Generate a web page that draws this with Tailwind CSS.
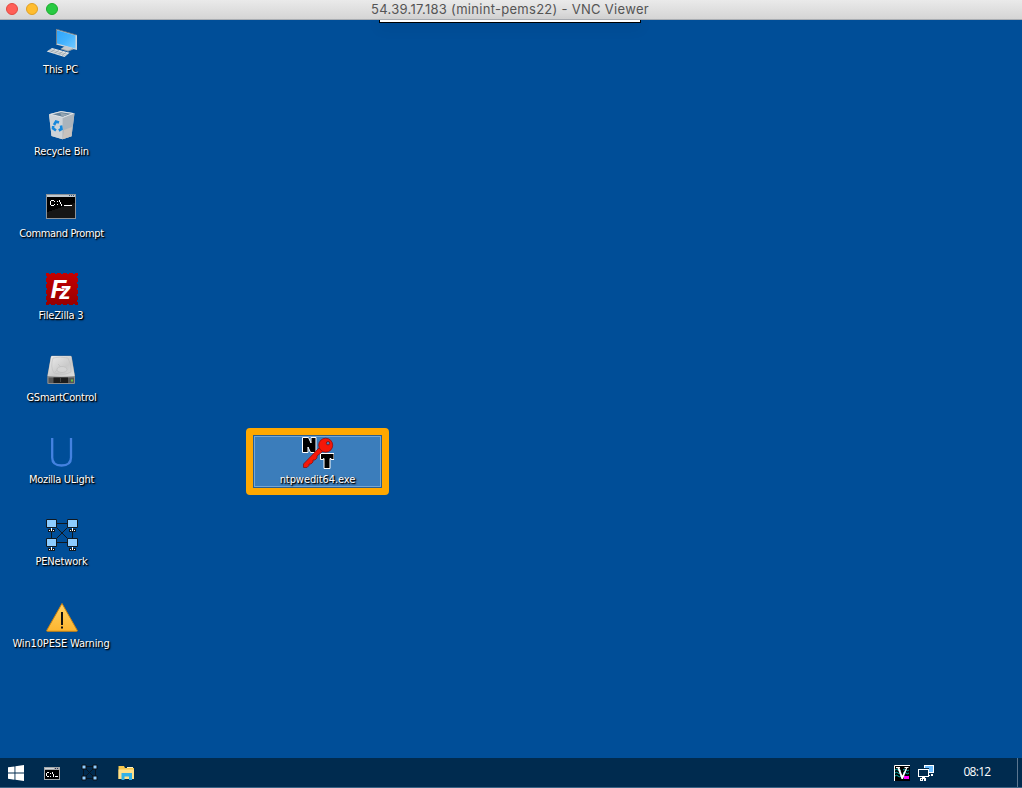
<!DOCTYPE html>
<html lang="en">
<head>
<meta charset="utf-8">
<title>VNC Viewer</title>
<script src="https://cdn.jsdelivr.net/npm/@tailwindcss/browser@4"></script>
</head>
<body class="w-[1022px] h-[788px] overflow-hidden bg-[#004e98] flex flex-col">
<header class="h-5 shrink-0 grid grid-cols-[1fr_auto_1fr] items-center bg-linear-to-b from-[#eaeaea] to-[#d5d5d5] border-b border-[#a9adb2]">
  <div class="flex gap-2 pl-1.5 pt-px -mt-0.5">
    <span class="size-3 rounded-full bg-[#ff5f57] border border-[#e2493f]"></span>
    <span class="size-3 rounded-full bg-[#ffbd2e] border border-[#dfa023]"></span>
    <span class="size-3 rounded-full bg-[#28ca42] border border-[#1bac2c]"></span>
  </div>
  <h1 class="font-['Inter','Liberation_Sans',sans-serif] text-[13px] leading-[18px] tracking-[0.29px] text-[#555] whitespace-nowrap -translate-x-px -mt-0.5">54.39.17.183 (minint-pems22) - VNC Viewer</h1>
</header>

<main class="relative grow flex font-['DejaVu_Sans_Condensed','DejaVu_Sans',sans-serif] text-[11px] leading-[14px] text-white [text-shadow:1px_1px_1px_#000,1px_1px_2px_#000]">
  <div class="absolute left-[379px] top-0 w-[262px] h-[3px] bg-white border border-t-0 border-black shadow-[0_3px_14px_rgba(0,0,0,0.18)]"></div>

  <nav class="w-[123px] pt-[7px] flex flex-col">
    <div class="h-[82px] flex flex-col items-center gap-1">
      <svg class="size-8 shrink-0" viewBox="0 0 32 32">
        <defs><linearGradient id="scr" x1="0" y1="0" x2="1" y2="1"><stop offset="0" stop-color="#2fa4fb"/><stop offset=".5" stop-color="#42b2fe"/><stop offset="1" stop-color="#73c9ff"/></linearGradient></defs>
        <path d="M10 2 31 8V23L10 17.500Z" fill="#d2d6d9"/><path d="M11 3.200 29.500 8.500V21.500L11 16.600Z" fill="url(#scr)"/><path d="M10.500 17.500V2.300L30.500 8" fill="none" stroke="#5b6b78" stroke-width=".8"/>
        <path d="M19 19 25 20.800 28 22 22 24.500 14.500 22Z" fill="#c5cacd"/><path d="M15 22 22 24 27 22" fill="none" stroke="#78848c" stroke-width=".6"/>
        <path d="M6 21 23.500 25.700 18.500 30 .7 24.500Z" fill="#e2e5e7"/><path d="M4 22.500 21 27.300M2.500 23.500 19.500 28.600M9 22 4.500 25.300M13 23 8.500 26.500M17 24.200 12.500 27.800M20 25.200 16 28.800" stroke="#8d9aa3" stroke-width=".6" fill="none"/>
      </svg>
      <span class="whitespace-nowrap tracking-[-0.2px] -ml-0.5">This PC</span>
    </div>
    <div class="h-[82px] flex flex-col items-center gap-1">
      <svg class="size-8 shrink-0" viewBox="0 0 32 32">
        <path d="M3 5.300 15 2 28.500 4.300 25.500 27.300 16.500 30.300 5.500 27Z" fill="#c9ced2"/>
        <path d="M3 5.300 16.700 9 16.500 30.300 5.500 27Z" fill="#cdd3d8"/><path d="M16.700 9 28.500 4.300 25.500 27.300 16.500 30.300Z" fill="#abb4bc"/>
        <path d="M18 21 26 18 25.500 27.300 16.500 30.300Z" fill="#c8c2bd"/>
        <path d="M4.500 5.300 15 2.700 27 4.500 16.700 8.300Z" fill="#66839b" stroke="#e6eaed" stroke-width=".9"/><path d="M14 3.500 16 8 22 5.500Z" fill="#93a4b1"/>
        <path d="M8 16 10 12.500 13 13.500M15 16.500 15.500 20 12.800 21.500M10 21.500 7 19.300 7.200 17" fill="none" stroke="#1688dc" stroke-width="2.600"/>
      </svg>
      <span class="whitespace-nowrap tracking-[-0.2px]">Recycle Bin</span>
    </div>
    <div class="h-[82px] flex flex-col items-center gap-1">
      <svg class="size-8 shrink-0" viewBox="0 0 32 32" shape-rendering="crispEdges">
        <rect y="3" width="30" height="25" fill="#8c9298"/><rect x="1" y="4" width="28" height="2" fill="#c0c8ce"/><path d="M23 4h1v1h-1zM25 4h1v1h-1zM27 4h1v1h-1z" fill="#365779"/>
        <rect x="1" y="6" width="28" height="21" fill="#000"/><path d="M1 21 29 12V27H1Z" fill="#161616"/>
        <path d="M5 9h3v1H5zM4 10h1v4H4zM5 14h3v1H5zM8 10h1v1H8zM8 13h1v1H8zM11 10h1v1h-1zM11 13h1v1h-1zM13 9h1v2h-1zM14 11h1v2h-1zM15 13h1v2h-1zM18 14h8v1h-8z" fill="#fff"/>
      </svg>
      <span class="whitespace-nowrap tracking-[-0.36px]">Command Prompt</span>
    </div>
    <div class="h-[82px] flex flex-col items-center gap-1">
      <svg class="size-8 shrink-0" viewBox="0 0 32 32">
        <defs><linearGradient id="fz" x1="0" y1="0" x2="0" y2="1"><stop offset="0" stop-color="#c50000"/><stop offset="1" stop-color="#970000"/></linearGradient></defs>
        <path d="M0 0H3V1H5V0H9V1H11V0H15V1H17V0H21V1H23V0H27V1H29V0H32V3H31V5H32V9H31V11H32V15H31V17H32V21H31V23H32V27H31V29H32V32H29V31H27V32H23V31H21V32H17V31H15V32H11V31H9V32H5V31H3V32H0V29H1V27H0V23H1V21H0V17H1V15H0V11H1V9H0V5H1V3H0Z" fill="url(#fz)"/>
        <text fill="#fff" font-family="Liberation Sans, sans-serif" font-weight="bold" font-style="italic" class="[text-shadow:none]" x="4.500" y="24.500" font-size="26">F<tspan x="13.300" y="26" font-size="23" stroke="#ad0000" stroke-width="1.200" paint-order="stroke">z</tspan></text>
      </svg>
      <span class="whitespace-nowrap tracking-[-0.2px] -ml-px">FileZilla 3</span>
    </div>
    <div class="h-[82px] flex flex-col items-center gap-1">
      <svg class="size-8 shrink-0" viewBox="0 0 32 32">
        <defs><linearGradient id="hd" x1="0" y1="0" x2="1" y2="1"><stop offset="0" stop-color="#ededed"/><stop offset=".6" stop-color="#c9c9c9"/><stop offset="1" stop-color="#dedede"/></linearGradient></defs>
        <path d="M6 .8H24.500Q25.500 .8 25.800 2L29 21V28Q29 29 28 29H2.500Q1.300 29 1.300 28V21L4.700 2Q5 .8 6 .8Z" fill="#8d8d8d"/>
        <path d="M6 1H24.500Q25.300 1 25.500 2L28.700 21Q15 22.500 1.600 21L5 2Q5.200 1 6 1Z" fill="url(#hd)"/>
        <path d="M7 3Q14 1 22 3Q26 10 25 17Q18 21 8 18Q4 12 7 3M12 9 18 15M9 17l4-4" fill="none" stroke="#bdbdbd" stroke-width=".6"/><ellipse cx="16" cy="14.500" rx="5" ry="3" fill="#d4d4d4" stroke="#bababa" stroke-width=".6"/>
        <path d="M2.500 22.500H28V28H2.500Z" fill="#555"/><path d="M7.500 22.500H22V28H7.500Z" fill="#1c1c1c"/><path d="M14.500 23v4" stroke="#444"/><path d="M25 24.500h2v2h-2z" fill="#66c540"/>
      </svg>
      <span class="whitespace-nowrap tracking-[-0.25px]">GSmartControl</span>
    </div>
    <div class="h-[82px] flex flex-col items-center gap-1">
      <svg class="size-8 shrink-0" viewBox="0 0 32 32"><path d="M6.200 1V20.500C6.200 26 9.500 28.500 15.500 28.500S25 26 25 20.500V1" fill="none" stroke="#4482e0" stroke-width="2.300"/></svg>
      <span class="whitespace-nowrap tracking-[-0.3px]">Mozilla ULight</span>
    </div>
    <div class="h-[82px] flex flex-col items-center gap-1">
      <svg class="size-8 shrink-0" viewBox="0 0 32 32">
        <path d="M11 4.500H21M11 23.500H21M5.500 9V19M26.500 9V19M10 8 22 20M22 8 10 20" stroke="#101820" fill="none"/><circle cx="16" cy="14" r="1" fill="#101820"/>
        <g fill="#8dccff" stroke="#101820"><path d="M.5 .5h10v8H.500zM21.500 .5h10v8h-10zM.5 19.500h10v8H.500zM21.500 19.500h10v8h-10z"/></g>
        <path d="M2 10h7v3H2zM23 10h7v3h-7zM2 29h7v3H2zM23 29h7v3h-7z" fill="#101820"/>
        <path d="M5 9h1v3H5zM3 11h1v1H3zM7 11h1v1H7zM26 9h1v3h-1zM24 11h1v1h-1zM28 11h1v1h-1zM5 28h1v3H5zM3 30h1v1H3zM7 30h1v1H7zM26 28h1v3h-1zM24 30h1v1h-1zM28 30h1v1h-1z" fill="#fff"/>
      </svg>
      <span class="whitespace-nowrap tracking-[-0.15px]">PENetwork</span>
    </div>
    <div class="h-[82px] flex flex-col items-center gap-1">
      <svg class="size-8 shrink-0" viewBox="0 0 32 32">
        <defs><linearGradient id="wr" x1="0" y1="0" x2="0" y2="1"><stop offset="0" stop-color="#ffd264"/><stop offset="1" stop-color="#fdb52e"/></linearGradient></defs>
        <path d="M16 2.500 31.300 29.500Q31.500 30.300 30.700 30.300H1.300Q.5 30.300 .7 29.500Z" fill="url(#wr)" stroke="#c98213" stroke-linejoin="round"/><path d="M15 11H17V24H15ZM15 25.500H17V27.500H15Z" fill="#111"/>
      </svg>
      <span class="whitespace-nowrap tracking-[-0.15px] -ml-px">Win10PESE Warning</span>
    </div>
  </nav>

  <section class="ml-[123px] mt-[408px] w-[143px] h-[67px] rounded-[4px] border-[7px] border-[#ffa800] bg-[#3b7dbb]">
    <div class="size-full border border-[#275d91]">
      <div class="size-full border border-[#76a6d2] flex flex-col items-center gap-1">
        <svg class="size-8 shrink-0" viewBox="0 0 32 32">
          <path d="M.5 .5H6.500L9 6V.5H14V15.500H8.500L6 10V15.500H.5Z" fill="#000" stroke="#fff" stroke-width="1"/>
          <path d="M18.500 16.500H32V22.500H29V21.500H28V31.500H22V21.500H21.500V22.500H18.500Z" fill="#000" stroke="#fff" stroke-width="1"/>
          <path d="M17 11 1.500 27V30.500H5L7 28.500V27H9L11 25V23H13L15 21V19L20.500 14.500Z" fill="#f51708" stroke="#8a1010" stroke-width=".8"/>
          <circle cx="23.700" cy="8.200" r="7" fill="#f51708" stroke="#8a1010" stroke-width=".8"/><circle cx="26" cy="6.200" r="1.700" fill="#4583bd" stroke="#7a1010" stroke-width=".8"/>
        </svg>
        <span class="whitespace-nowrap tracking-[-0.08px]">ntpwedit64.exe</span>
      </div>
    </div>
  </section>
</main>

<footer class="h-[30px] shrink-0 flex items-center justify-between bg-[#002b4f] border-b border-[#3c6485]">
  <div class="flex items-center pl-2 gap-5">
    <svg class="size-4" viewBox="0 0 16 16"><path d="M0 2.300 6.500 1.400V7.600H0ZM7.400 1.300 16 0V7.600H7.400ZM0 8.500H6.500V14.700L0 13.800ZM7.400 8.500H16V16L7.400 14.800Z" fill="#fff"/></svg>
    <svg class="size-4" viewBox="0 0 16 16" shape-rendering="crispEdges"><path d="M0 2h16v13H0z" fill="#a4a8ab"/><path d="M1 5h14v9H1z" fill="#000"/><path d="M1 3h9v1H1z" fill="#d4d7d9"/><path d="M11 3h1v1h-1zM13 3h1v1h-1z" fill="#335"/><path d="M3 7h2v1H3zM2 8h1v3H2zM3 11h2v1H3zM6 8h1v1H6zM6 11h1v1H6zM8 7h1v2H8zM9 9h1v3H9zM11 11h3v1h-3z" fill="#fff"/></svg>
    <svg class="size-[17px] ml-px" viewBox="0 0 17 17"><path d="M2.500 2.500H14.500V14.500H2.500ZM3 3 14 14M14 3 3 14" fill="none" stroke="#071522"/><path d="M1 1h4v4H1zM12 1h4v4h-4zM1 12h4v4H1zM12 12h4v4h-4z" fill="#8dccff" stroke="#0a1016"/></svg>
    <svg class="w-[17px] h-4" viewBox="0 0 17 16"><path d="M.5 1H6L7 3H16V14H.500Z" fill="#f5c74f"/><path d="M.5 4.500H16V14H.500Z" fill="#ffe08a"/><path d="M9 2h6v1H9z" fill="#fff3c4"/><path d="M3.500 8H14V15H11V11.500H6.500V15H3.500Z" fill="#32b1e8"/></svg>
  </div>
  <div class="flex items-center h-full">
    <svg class="size-4" viewBox="0 0 16 16"><path d="M0 0H16V16H0Z" fill="#000"/><path d="M.5 16V.5H16" fill="none" stroke="#fff"/><path d="M1 5q1.500-1.500 3 0t3 0M1 8q1.500-1.500 3 0t3 0M1 11q1.500-1.500 3 0t3 0M9 5q1.500-1.500 3 0t3 0M9 8q1.500-1.500 3 0t3 0" fill="none" stroke="#00b5b5"/><path d="M2 2H6V3H5.500L8.300 10.500 12 3H10.500V2H14.500V3H13.300L9 14H7.500L3.500 3H2Z" fill="#fff"/><path d="M10 11h5v3h-5z" fill="#ff00ff"/></svg>
    <svg class="size-4 ml-2" viewBox="0 0 16 16" shape-rendering="crispEdges"><path d="M6 0h10v8h-5V3H6z" fill="#fff"/><path d="M7 1h8v6h-4V3H7z" fill="#6dbdff"/><path d="M0 4h11v8H0z" fill="#fff"/><path d="M1 5h9v6H1z" fill="#002b4f"/><path d="M2 13h2v-1h3v1h1v3H6v-2H5v2H2zM13 9h2v2h-2zM11 10h1v1h-1z" fill="#fff"/><path d="M3 14h1v1H3z" fill="#002b4f"/></svg>
    <time class="ml-[29px] w-[28px] text-center whitespace-nowrap font-['Open_Sans',sans-serif] text-[12px] leading-4 tracking-[-0.7px] text-white -mt-0.5">08:12</time>
    <span class="ml-[26px] w-[5px] h-full border-l border-[#5b7690]"></span>
  </div>
</footer>
</body>
</html>
